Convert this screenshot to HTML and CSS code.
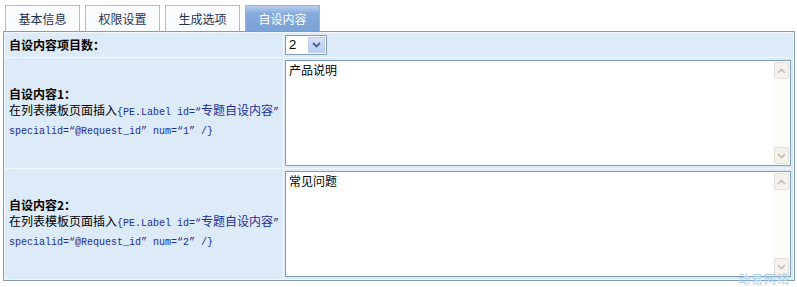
FILE: index.html
```html
<!DOCTYPE html>
<html lang="zh-CN">
<head>
  <meta charset="UTF-8" />
  <title>专题设置</title>
  <link rel="stylesheet" href="styles.css">
</head>
<body>
<ul class="tabs">
  <li class="tab">基本信息</li>
  <li class="tab">权限设置</li>
  <li class="tab">生成选项</li>
  <li class="tab active">自设内容</li>
</ul>

<table class="form">
  <tr class="row-head">
    <td class="label"><strong>自设内容项目数：</strong></td>
    <td class="field">
      <div class="select"><span class="select-val">2</span><span class="select-btn"><svg width="9" height="6" viewBox="0 0 9 6"><path d="M1 1 L4.5 4.5 L8 1" fill="none" stroke="#4a5f8c" stroke-width="1.8"/></svg></span></div>
    </td>
  </tr>
  <tr class="row-item">
    <td class="label">
      <strong>自设内容1：</strong><br>
      <span class="hint">在列表模板页面插入</span><code>{PE.Label id=“<span class="cjk">专题自设内容</span>”<br>specialid=“@Request_id” num=“1” /}</code>
    </td>
    <td class="field">
      <div class="memo"><textarea>产品说明</textarea><div class="scroll"><span class="sbtn"><svg width="9" height="6" viewBox="0 0 9 6"><path d="M1 5 L4.5 1.5 L8 5" fill="none" stroke="#c2c0b4" stroke-width="1.6"/></svg></span><span class="sbtn"><svg width="9" height="6" viewBox="0 0 9 6"><path d="M1 1 L4.5 4.5 L8 1" fill="none" stroke="#c2c0b4" stroke-width="1.6"/></svg></span></div></div>
    </td>
  </tr>
  <tr class="row-item">
    <td class="label">
      <strong>自设内容2：</strong><br>
      <span class="hint">在列表模板页面插入</span><code>{PE.Label id=“<span class="cjk">专题自设内容</span>”<br>specialid=“@Request_id” num=“2” /}</code>
    </td>
    <td class="field">
      <div class="memo"><textarea>常见问题</textarea><div class="scroll"><span class="sbtn"><svg width="9" height="6" viewBox="0 0 9 6"><path d="M1 5 L4.5 1.5 L8 5" fill="none" stroke="#c2c0b4" stroke-width="1.6"/></svg></span><span class="sbtn"><svg width="9" height="6" viewBox="0 0 9 6"><path d="M1 1 L4.5 4.5 L8 1" fill="none" stroke="#c2c0b4" stroke-width="1.6"/></svg></span></div></div>
    </td>
  </tr>
</table>
<div class="mark">动易网络</div>
</body>
</html>
```

FILE: styles.css
```css
body {
  margin: 0;
  padding: 5px 2px 0 3px;
  background: #fff;
  font-family: "Noto Sans CJK SC", "Liberation Sans", sans-serif;
  font-size: 12px;
  color: #000;
}
/* Tabs */
.tabs { list-style:none; margin:0 0 0 2px; padding:0; display:flex; gap:5px; height:26px; }
.tab { width:73px; height:25px; border:1px solid #a7bdd4; border-bottom:none; background:#fbfcfe; color:#1f3250; text-align:center; line-height:25px; font-size:12px; }
.tab.active { border-color:#94b4dc; background:linear-gradient(#b8d0ee, #86abdb 30%, #7ba3d6); color:#fff; }
/* Form table */
.form { width:792px; border:1px solid #7f9db9; border-spacing:1px; background:#f1f7fc; }
.form td { background:#dcebf7; padding:0; }
.form .label { width:274px; padding-left:4px; line-height:16px; }
.form .field { padding:2px 2px 2px 1px; }
.row-head td { height:24px; }
.row-head .field { padding:0 1px; }
.hint { letter-spacing:0; }
code { font-family:"Liberation Mono", monospace; font-size:10px; color:#1d2b98; }
code .cjk { font-family:"Noto Sans CJK SC", sans-serif; font-size:12px; }
/* Select */
.select { display:flex; width:40px; height:18px; border:1px solid #7f9db9; background:#fff; }
.select-val { flex:1; padding-left:3px; line-height:18px; font-family:"Liberation Sans", sans-serif; font-size:13px; }
.select-btn { width:15px; margin:1px; display:flex; align-items:center; justify-content:center; background:linear-gradient(#d4e1fb, #b8cdf5); border:1px solid #bccdf0; }
/* Memo boxes */
.memo { display:flex; height:104px; border:1px solid #7f9db9; background:#fff; }
.memo textarea { flex:1; border:none; resize:none; outline:none; padding:2px 3px; font-family:"Noto Sans CJK SC", sans-serif; font-size:12px; line-height:14px; overflow:hidden; }
.scroll { width:17px; background:#fbfbf7; display:flex; flex-direction:column; justify-content:space-between; }
.sbtn { height:15px; margin:1px; display:flex; align-items:center; justify-content:center; background:#f3f2ec; border:1px solid #e3e1d6; border-radius:2px; }
.mark { position:absolute; right:7px; top:272px; line-height:13px; color:#a9cdea; font-size:12px; letter-spacing:1px; }
```
